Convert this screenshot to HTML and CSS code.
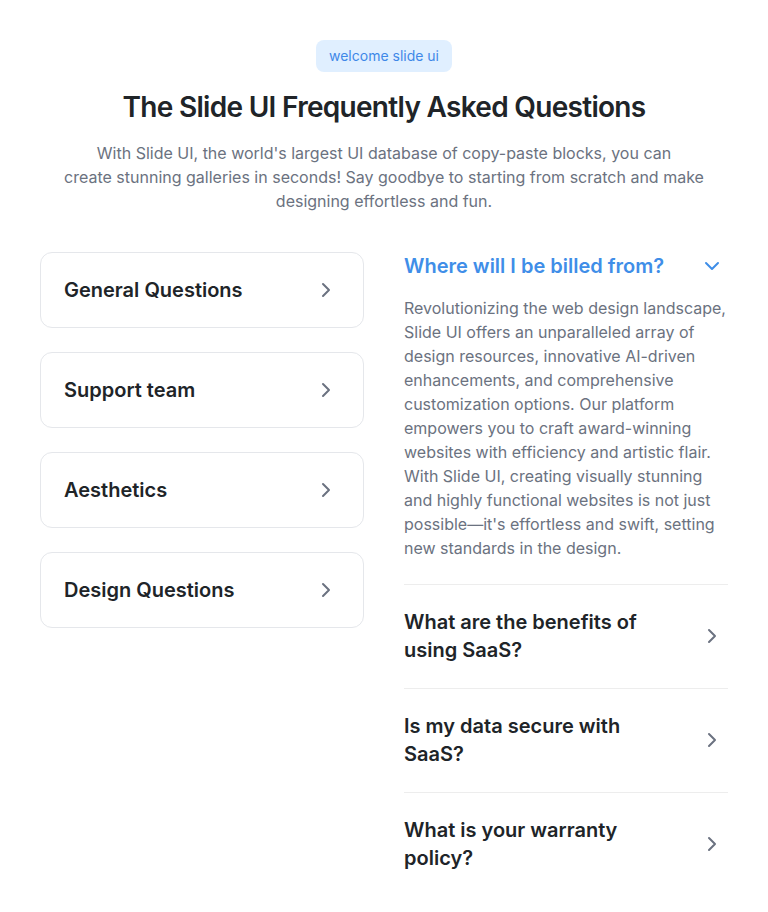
FILE: index.html
```html
<!DOCTYPE html>
<html lang="en">
<head>
<meta charset="utf-8">
<title>FAQ</title>
<link rel="stylesheet" href="styles.css">
</head>
<body>
<section class="faq">
  <header class="faq-head">
    <span class="badge">welcome slide ui</span>
    <h1 class="title">The Slide UI Frequently Asked Questions</h1>
    <p class="lead">With Slide UI, the world's largest UI database of copy-paste blocks, you can<br>create stunning galleries in seconds! Say goodbye to starting from scratch and make<br>designing effortless and fun.</p>
  </header>
  <div class="faq-grid">
    <div class="cats">
      <button class="cat"><span>General Questions</span><svg class="ico" viewBox="0 0 24 24"><path d="m9 18 6-6-6-6"/></svg></button>
      <button class="cat"><span>Support team</span><svg class="ico" viewBox="0 0 24 24"><path d="m9 18 6-6-6-6"/></svg></button>
      <button class="cat"><span>Aesthetics</span><svg class="ico" viewBox="0 0 24 24"><path d="m9 18 6-6-6-6"/></svg></button>
      <button class="cat"><span>Design Questions</span><svg class="ico" viewBox="0 0 24 24"><path d="m9 18 6-6-6-6"/></svg></button>
    </div>
    <div class="qs">
      <div class="q open">
        <div class="q-row"><span class="q-title">Where will I be billed from?</span><svg class="ico q-ico" viewBox="0 0 24 24"><path d="m6 9 6 6 6-6"/></svg></div>
        <p class="answer">Revolutionizing the web design landscape, Slide UI offers an unparalleled array of design resources, innovative AI-driven enhancements, and comprehensive customization options. Our platform empowers you to craft award-winning websites with efficiency and artistic flair. With Slide UI, creating visually stunning and highly functional websites is not just possible—it's effortless and swift, setting new standards in the design.</p>
      </div>
      <div class="q">
        <div class="q-row"><span class="q-title">What are the benefits of using SaaS?</span><svg class="ico q-ico" viewBox="0 0 24 24"><path d="m9 18 6-6-6-6"/></svg></div>
      </div>
      <div class="q">
        <div class="q-row"><span class="q-title">Is my data secure with SaaS?</span><svg class="ico q-ico" viewBox="0 0 24 24"><path d="m9 18 6-6-6-6"/></svg></div>
      </div>
      <div class="q">
        <div class="q-row"><span class="q-title">What is your warranty policy?</span><svg class="ico q-ico" viewBox="0 0 24 24"><path d="m9 18 6-6-6-6"/></svg></div>
      </div>
    </div>
  </div>
</section>
</body>
</html>
```
FILE: styles.css
```css
* { box-sizing: border-box; }
html, body { margin: 0; background: #ffffff; }
body {
  font-family: Inter, "Noto Sans", sans-serif;
  color: #1f2328;
  padding: 40px 40px;
}
.faq-head {
  display: flex;
  flex-direction: column;
  align-items: center;
  text-align: center;
}
.badge {
  display: inline-block;
  background: #e0efff;
  color: #3f88e8;
  font-size: 14px;
  line-height: 20px;
  padding: 6px 13px;
  border-radius: 8px;
}
.title {
  margin: 16px 0 0;
  font-size: 28px;
  line-height: 38px;
  font-weight: 600;
  letter-spacing: -0.7px;
  color: #202428;
}
.lead {
  margin: 15px 0 0;
  font-size: 16px;
  line-height: 24px;
  color: #6b7280;
}
.faq-grid {
  margin-top: 39px;
  display: grid;
  grid-template-columns: 1fr 1fr;
  column-gap: 40px;
  align-items: start;
}
.cats {
  display: flex;
  flex-direction: column;
  gap: 24px;
}
.cat {
  display: flex;
  align-items: center;
  justify-content: space-between;
  height: 76px;
  padding: 0 25px 0 23px;
  background: #fff;
  border: 1px solid #e5e7eb;
  border-radius: 12px;
  font-family: inherit;
  font-size: 20px;
  font-weight: 600;
  color: #202428;
  text-align: left;
  cursor: pointer;
}
.ico {
  width: 24px;
  height: 24px;
  flex: none;
  fill: none;
  stroke: #6b7280;
  stroke-width: 2;
  stroke-linecap: round;
  stroke-linejoin: round;
}
.q {
  padding: 23px 0 24px;
  border-bottom: 1px solid #ededed;
}
.q:first-child { padding-top: 0; }
.q:last-child { border-bottom: none; }
.q-row {
  display: flex;
  align-items: center;
  justify-content: space-between;
}
.q-title {
  max-width: 268px;
  font-size: 20px;
  line-height: 28px;
  font-weight: 600;
  color: #202428;
}
.q-ico { margin-right: 4px; }
.q.open .q-title { color: #3f8ee8; max-width: none; }
.q.open .q-ico { stroke: #3f8ee8; }
.answer {
  margin: 16px 0 0;
  font-size: 16px;
  line-height: 24px;
  color: #6b7280;
}
```
